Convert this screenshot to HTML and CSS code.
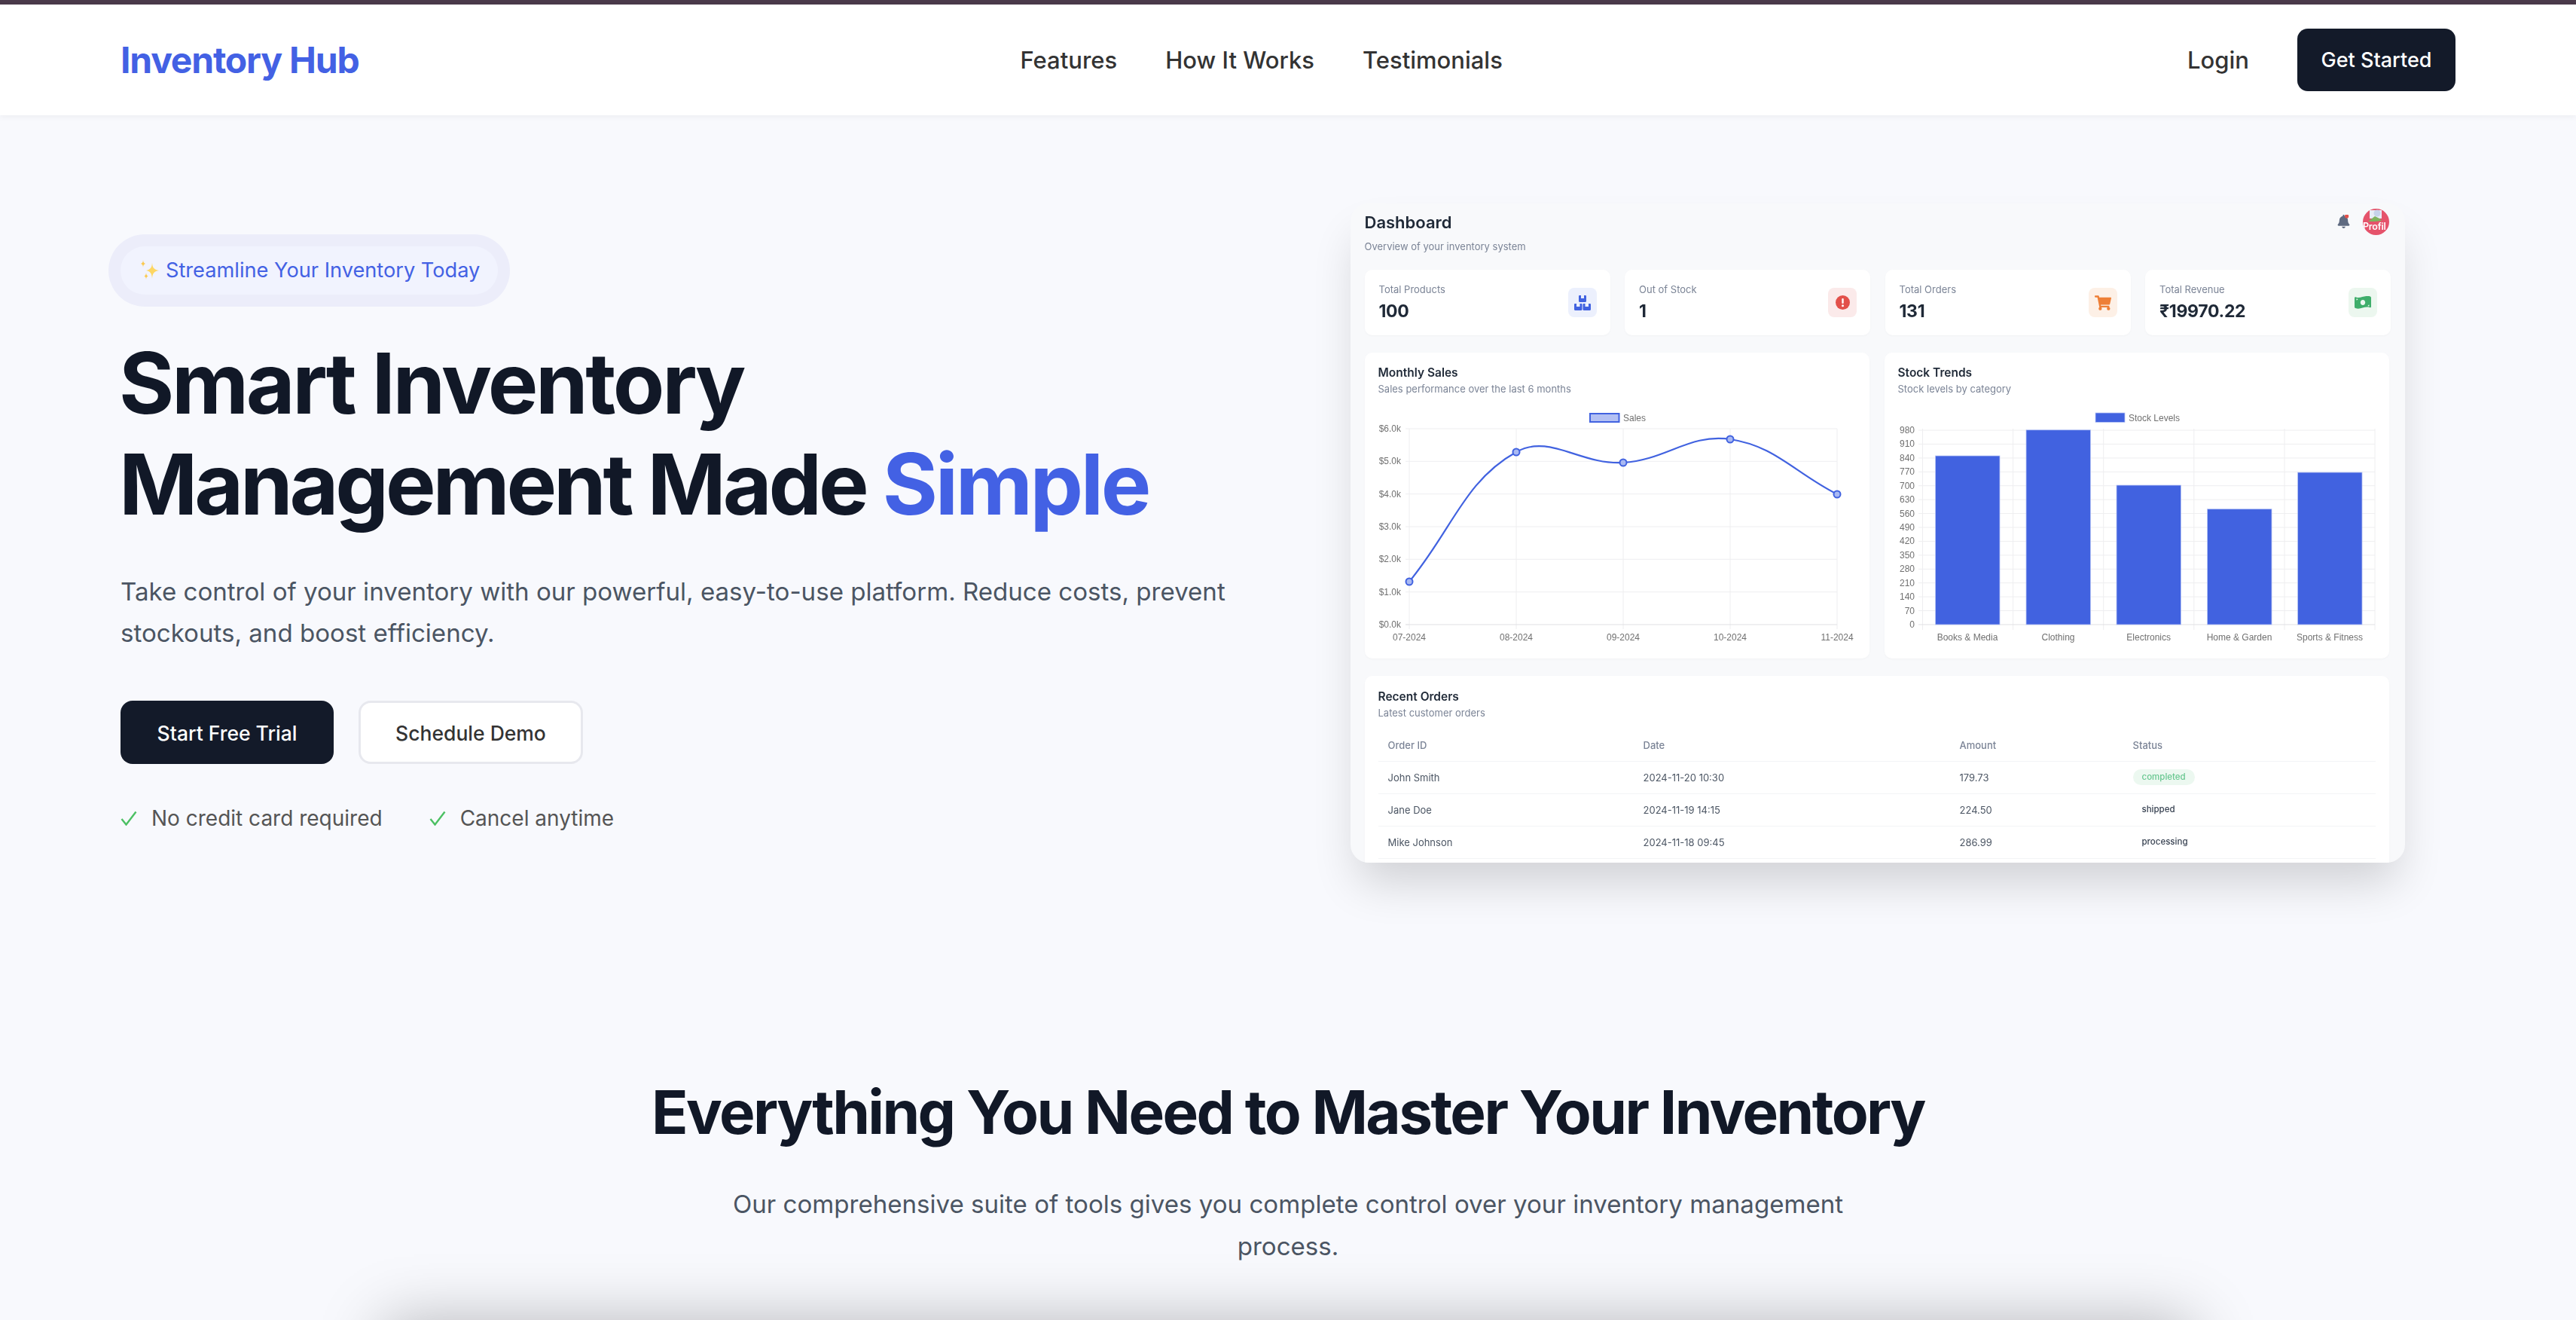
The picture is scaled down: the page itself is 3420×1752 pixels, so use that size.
FILE: index.html
```html
<!DOCTYPE html>
<html lang="en">
<head>
<meta charset="utf-8">
<title>Inventory Hub</title>
<link rel="stylesheet" href="styles.css">
</head>
<body>
<div class="topline"></div>
<header class="nav">
  <a class="logo">Inventory Hub</a>
  <nav class="nav-links"><a>Features</a><a>How It Works</a><a>Testimonials</a></nav>
  <div class="nav-actions"><a class="login">Login</a><a class="btn btn-dark btn-nav">Get Started</a></div>
</header>

<section class="hero">
  <div class="hero-left">
    <div class="pill">
      <svg class="sparkle" viewBox="0 0 26 26"><path fill="#fdd663" d="M16 4c.5 6 2 8.500 9 10-7 1.500-8.500 4-9 11-.5-7-2-9.500-8-11 6-1.500 7.500-4 8-10z"/><path fill="#fbc94f" d="M4 0c.2 3 .8 4 3 5-2.200 1-2.800 2-3 5-.2-3-.8-4-3-5 2.200-1 2.800-2 3-5zM8 17c.2 2.500.7 3.500 2.500 4.500-1.800.8-2.300 1.800-2.500 4.500-.2-2.700-.7-3.700-2.500-4.500 1.800-1 2.300-2 2.500-4.500z"/></svg>
      <span>Streamline Your Inventory Today</span>
    </div>
    <h1>Smart Inventory<br><span class="tight">Management Made </span><em>Simple</em></h1>
    <p class="lead">Take control of your inventory with our powerful, easy-to-use platform. Reduce costs, prevent stockouts, and boost efficiency.</p>
    <div class="cta">
      <a class="btn btn-dark btn-lg">Start Free Trial</a>
      <a class="btn btn-light btn-lg">Schedule Demo</a>
    </div>
    <ul class="checks">
      <li><svg viewBox="0 0 22 20"><path d="M1.500 11l6 7.500L20.500 1.500" fill="none" stroke="#4cc063" stroke-width="2.400"/></svg>No credit card required</li>
      <li><svg viewBox="0 0 22 20"><path d="M1.500 11l6 7.500L20.500 1.500" fill="none" stroke="#4cc063" stroke-width="2.400"/></svg>Cancel anytime</li>
    </ul>
  </div>

  <div class="shot">
    <div class="shot-inner">
      <div class="dash-head">
        <div><div class="dash-title">Dashboard</div><div class="dash-sub">Overview of your inventory system</div></div>
        <div class="dash-user">
          <svg class="bell" viewBox="0 0 448 512"><path fill="#5e6a80" d="M224 512c35.320 0 63.970-28.650 63.970-64H160.030c0 35.350 28.650 64 63.970 64zm215.390-149.710c-19.320-20.760-55.470-51.990-55.470-154.290 0-77.700-54.480-139.900-127.940-155.160V32c0-17.670-14.320-32-31.980-32s-31.980 14.330-31.980 32v20.840C118.560 68.100 64.080 130.300 64.080 208c0 102.300-36.150 133.530-55.470 154.290-6 6.450-8.660 14.160-8.610 21.710.11 16.400 12.980 32 32.100 32h383.800c19.120 0 32-15.600 32.100-32 .05-7.550-2.610-15.270-8.610-21.710z"/><circle cx="340" cy="60" r="75" fill="#e2504a"/></svg>
          <div class="avatar">
            <svg class="avatar-pic" viewBox="0 0 35 19"><path d="M9 2h16v11H9z" fill="#e8edf6"/><path d="M7 17l9-7 6 3 3 3-9 1z" fill="#7fb35f"/><circle cx="19" cy="6" r="4.500" fill="#c6d3ea"/></svg>
            <span>Profil</span>
          </div>
        </div>
      </div>

      <div class="stats">
        <div class="stat"><div><div class="stat-label">Total Products</div><div class="stat-value">100</div></div>
          <div class="stat-icon ic-blue"><svg width="22" height="20" viewBox="0 0 22 20"><path fill="#4162e0" d="M6 1.200C6 .5 6.500 0 7.200 0H9v4h4V0h1.800c.7 0 1.200.5 1.200 1.200V7.800c0 .7-.5 1.200-1.200 1.200H7.200C6.500 9 6 8.500 6 7.800zM0 12.200C0 11.500.5 11 1.200 11H3v4h4.500v-4h1.800c.7 0 1.200.5 1.200 1.200V18.800c0 .7-.5 1.200-1.200 1.200H1.200C.5 20 0 19.500 0 18.800zM11.500 12.200c0-.7.5-1.200 1.200-1.200h1.800v4H19v-4h1.800c.7 0 1.200.5 1.200 1.200V18.800c0 .7-.5 1.200-1.200 1.200h-8.100c-.7 0-1.200-.5-1.200-1.200z"/></svg></div></div>
        <div class="stat"><div><div class="stat-label">Out of Stock</div><div class="stat-value">1</div></div>
          <div class="stat-icon ic-red"><svg width="19" height="19" viewBox="0 0 19 19"><circle cx="9.500" cy="9.500" r="9.500" fill="#e2504a"/><rect x="8.300" y="4" width="2.400" height="7" rx="1" fill="#fff"/><circle cx="9.500" cy="13.700" r="1.500" fill="#fff"/></svg></div></div>
        <div class="stat"><div><div class="stat-label">Total Orders</div><div class="stat-value">131</div></div>
          <div class="stat-icon ic-orange"><svg width="22" height="20" viewBox="0 0 576 512"><path fill="#ee7f36" d="M528.120 301.319l47.273-208C578.806 78.301 567.391 64 551.990 64H159.208l-9.166-44.810C147.758 8.021 137.930 0 126.529 0H24C10.745 0 0 10.745 0 24v16c0 13.255 10.745 24 24 24h69.883l70.248 343.435C147.325 417.100 136 435.222 136 456c0 30.928 25.072 56 56 56s56-25.072 56-56c0-15.674-6.447-29.835-16.824-40h209.647C430.447 426.165 424 440.326 424 456c0 30.928 25.072 56 56 56s56-25.072 56-56c0-22.172-12.888-41.332-31.579-50.405l5.517-24.276c3.413-15.018-8.002-29.319-23.403-29.319H218.117l-6.545-32h293.145c11.206 0 20.920-7.754 23.403-18.681z"/></svg></div></div>
        <div class="stat"><div><div class="stat-label">Total Revenue</div><div class="stat-value">₹19970.22</div></div>
          <div class="stat-icon ic-green"><svg width="22" height="17" viewBox="0 0 22 17"><path fill="#3fae6b" fill-rule="evenodd" d="M0 2.500C0 1.500 1 1 2 1.400c6 2 12-2.800 18-1.200.9.200 2 .8 2 1.800v12c0 1-1 1.500-2 1.100-6-2-12 2.800-18 1.200-.9-.2-2-.8-2-1.800zM11 5c-1.900 0-3.200 1.600-3.200 3.500S9.100 12 11 12s3.200-1.600 3.200-3.500S12.900 5 11 5zM2.500 3.500v2a2 2 0 0 0 2-1.700zM19.500 13.500v-2a2 2 0 0 0-2 1.700z"/></svg></div></div>
      </div>

      <div class="charts">
        <div class="panel">
          <div class="panel-title">Monthly Sales</div>
          <div class="panel-sub">Sales performance over the last 6 months</div>
          <svg class="chart" viewBox="1812 530 670 344">
            <g class="grid">
              <path d="M1871 569H2439M1871 612.300H2439M1871 655.700H2439M1871 699H2439M1871 742.300H2439M1871 785.700H2439M1866 569h5M1866 612.300h5M1866 655.700h5M1866 699h5M1866 742.300h5M1866 785.700h5M1866 829h5"/>
              <path d="M1871 569V835M2013 569V835M2155 569V835M2297 569V835M2439 569V835"/>
              <path class="axis" d="M1866 829H2439"/>
            </g>
            <rect x="2111" y="549" width="38.500" height="11" fill="#b3c0f3" stroke="#4162e0" stroke-width="2"/>
            <text x="2155" y="558.500" class="lbl">Sales</text>
            <g class="lbl end">
              <text x="1860" y="573">$6.0k</text><text x="1860" y="616.300">$5.0k</text><text x="1860" y="659.700">$4.0k</text><text x="1860" y="703">$3.0k</text><text x="1860" y="746.300">$2.0k</text><text x="1860" y="789.700">$1.0k</text><text x="1860" y="833">$0.0k</text>
            </g>
            <g class="lbl mid">
              <text x="1871" y="850">07-2024</text><text x="2013" y="850">08-2024</text><text x="2155" y="850">09-2024</text><text x="2297" y="850">10-2024</text><text x="2439" y="850">11-2024</text>
            </g>
            <path d="M1871 772C1928 703 1944 638.500 2013 600C2057 575 2098 617.400 2155 614C2212 610.600 2243 575 2297 583C2356.500 591.800 2382 627 2439 656" fill="none" stroke="#4162e0" stroke-width="2.200"/>
            <g fill="#a9b9f2" stroke="#4162e0" stroke-width="2">
              <circle cx="1871" cy="772" r="4.500"/><circle cx="2013" cy="600" r="4.500"/><circle cx="2155" cy="614" r="4.500"/><circle cx="2297" cy="583" r="4.500"/><circle cx="2439" cy="656" r="4.500"/>
            </g>
          </svg>
        </div>
        <div class="panel">
          <div class="panel-title">Stock Trends</div>
          <div class="panel-sub">Stock levels by category</div>
          <svg class="chart" viewBox="2502 530 670 344">
            <g class="grid">
              <path d="M2547 571H3153M2547 589.400H3153M2547 607.900H3153M2547 626.300H3153M2547 644.700H3153M2547 663.100H3153M2547 681.600H3153M2547 700H3153M2547 718.400H3153M2547 736.900H3153M2547 755.300H3153M2547 773.700H3153M2547 792.100H3153M2547 810.600H3153"/>
              <path d="M2552.500 569V836M2672.600 569V836M2792.700 569V836M2912.800 569V836M3033 569V836M3153 569V836"/>
              <path class="axis" d="M2547 829H3153"/>
            </g>
            <rect x="2782" y="548" width="39" height="12.500" fill="#4162e0" stroke="#b9c6f5" stroke-width=".8"/>
            <text x="2826" y="558.500" class="lbl">Stock Levels</text>
            <g class="lbl end">
              <text x="2542" y="575">980</text><text x="2542" y="593.400">910</text><text x="2542" y="611.900">840</text><text x="2542" y="630.300">770</text><text x="2542" y="648.700">700</text><text x="2542" y="667.100">630</text><text x="2542" y="685.600">560</text><text x="2542" y="704">490</text><text x="2542" y="722.400">420</text><text x="2542" y="740.900">350</text><text x="2542" y="759.300">280</text><text x="2542" y="777.700">210</text><text x="2542" y="796.100">140</text><text x="2542" y="814.600">70</text><text x="2542" y="833">0</text>
            </g>
            <g fill="#4162e0" stroke="#b9c6f5" stroke-width=".8">
              <rect x="2569.500" y="605" width="85.500" height="224"/><rect x="2690" y="570.700" width="85.500" height="258.300"/><rect x="2810" y="644" width="85.500" height="185"/><rect x="2930.500" y="675.700" width="85.500" height="153.300"/><rect x="3050.500" y="627" width="85.500" height="202"/>
            </g>
            <g class="lbl mid">
              <text x="2612" y="850">Books &amp; Media</text><text x="2732.500" y="850">Clothing</text><text x="2852.700" y="850">Electronics</text><text x="2973" y="850">Home &amp; Garden</text><text x="3093" y="850">Sports &amp; Fitness</text>
            </g>
          </svg>
        </div>
      </div>

      <div class="panel orders">
        <div class="panel-title">Recent Orders</div>
        <div class="panel-sub">Latest customer orders</div>
        <table class="orders-table">
          <colgroup><col class="c1"><col class="c2"><col class="c3"><col class="c4"></colgroup>
          <thead><tr><th>Order ID</th><th>Date</th><th>Amount</th><th>Status</th></tr></thead>
          <tbody>
            <tr><td>John Smith</td><td>2024-11-20 10:30</td><td>179.73</td><td><span class="tag tag-done">completed</span></td></tr>
            <tr><td>Jane Doe</td><td>2024-11-19 14:15</td><td>224.50</td><td><span class="tag">shipped</span></td></tr>
            <tr><td>Mike Johnson</td><td>2024-11-18 09:45</td><td>286.99</td><td><span class="tag">processing</span></td></tr>
          </tbody>
        </table>
      </div>
    </div>
  </div>
</section>

<section class="features">
  <h2>Everything You Need to Master Your Inventory</h2>
  <p>Our comprehensive suite of tools gives you complete control over your inventory management process.</p>
  <div class="feature-shot"></div>
</section>
</body>
</html>
```
FILE: styles.css
```css
* { box-sizing: border-box; }
html, body { margin: 0; height: 100%; overflow: hidden; }
body { background: #f8f9fd; color: #111827; font-family: Inter, "Liberation Sans", sans-serif; }

.topline { height: 6px; background: #4a3a4a; }
.nav { height: 147px; background: #fff; display: flex; align-items: center; padding: 0 160px; box-shadow: 0 2px 8px rgba(0,0,0,.05); position: relative; }
.logo { font-size: 48px; font-weight: 700; color: #4361e4; letter-spacing: -1.2px; }
.nav-links { display: flex; gap: 64px; font-size: 31px; font-weight: 500; color: #333; margin-left: 878px; }
.nav-actions { display: flex; align-items: center; gap: 64px; margin-left: auto; }
.login { font-size: 31px; font-weight: 500; color: #333; }

.btn { display: flex; align-items: center; justify-content: center; font-weight: 500; font-size: 27px; }
.btn-dark { background: #131a29; color: #fff; }
.btn-nav { width: 210px; height: 83px; border-radius: 14px; }
.btn-lg { height: 84px; border-radius: 16px; font-size: 26.500px; padding-top: 2px; }
.btn-dark.btn-lg { width: 283px; }
.btn-light { width: 298px; background: #fff; color: #333; border: 3px solid #e7e8ee; }

.hero { display: grid; grid-template-columns: 1fr 1400px; padding: 117px 227px 0 160px; height: 992px; }
.hero-left { padding-top: 57px; }
.pill { display: inline-flex; align-items: center; gap: 8px; height: 64px; padding: 0 24px 2px 26px; border-radius: 32px; background: #f1f3fe; color: #4361e4; font-size: 27.200px; font-weight: 400; box-shadow: 0 0 0 16px #ecedfa; }
.sparkle { width: 26px; height: 26px; }
h1 { margin: 50px 0 0 -2px; font-size: 112px; line-height: 134.4px; font-weight: 700; letter-spacing: -3.4px; color: #111827; }
h1 .tight { letter-spacing: -4.2px; }
h1 em { font-style: normal; color: #4361e4; }
.lead { margin: 48px 0 0; width: 1500px; font-size: 33.100px; line-height: 55.500px; color: #4b5563; }
.cta { display: flex; gap: 33px; margin-top: 61px; }
.checks { display: flex; gap: 62px; list-style: none; margin: 52px 0 0; padding: 0; font-size: 28px; line-height: 40px; color: #555; }
.checks li { display: flex; align-items: center; gap: 19px; }
.checks svg { width: 22px; height: 20px; }

.shot { width: 1400px; height: 875px; border-radius: 24px; background: #f8f9fb; box-shadow: 0 36px 60px -10px rgba(0,0,0,.16); overflow: hidden; }
.shot-inner { padding: 0 21px 0 18.500px; filter: blur(.45px); }
.dash-head { height: 88px; display: flex; justify-content: space-between; padding-top: 12px; }
.dash-title { font-size: 22px; font-weight: 600; color: #1f2937; line-height: 26px; }
.dash-sub { font-size: 13px; color: #7b8496; margin-top: 11px; line-height: 16px; }
.dash-user { display: flex; gap: 17px; align-items: flex-start; margin-top: -5px; }
.bell { width: 17px; height: 18px; margin-top: 8px; }
.avatar { width: 35px; height: 35px; border-radius: 50%; background: #e5536b; overflow: hidden; }
.avatar-pic { display: block; width: 35px; height: 19px; }
.avatar span { display: block; color: #fff; font-size: 12.500px; font-weight: 600; line-height: 14px; letter-spacing: -.2px; white-space: nowrap; margin-top: -2px; }

.stats { display: grid; grid-template-columns: repeat(4, 326px); gap: 19.500px; }
.stat { height: 87px; background: #fff; border-radius: 10px; box-shadow: 0 1px 3px rgba(0,0,0,.03); padding: 17px 18px 0 19px; display: flex; justify-content: space-between; }
.stat-label { font-size: 13px; color: #7b8496; line-height: 18px; }
.stat-value { font-size: 23px; font-weight: 700; letter-spacing: -.3px; line-height: 28px; margin-top: 6px; color: #1f2937; }
.stat-icon { width: 38px; height: 39px; border-radius: 8px; display: flex; align-items: center; justify-content: center; margin-top: 7px; }
.ic-blue { background: #ecf0fd; }
.ic-red { background: #fbeaea; }
.ic-orange { background: #fdf0e6; }
.ic-green { background: #ecf7ef; }

.charts { display: grid; grid-template-columns: repeat(2, 670px); gap: 20px; margin-top: 23px; }
.panel { background: #fff; border-radius: 10px; box-shadow: 0 1px 3px rgba(0,0,0,.03); padding: 18px 18px 0; }
.charts .panel { height: 406px; padding: 17px 0 0; }
.charts .panel-title, .charts .panel-sub { padding-left: 18px; }
.panel-title { font-size: 15.500px; font-weight: 600; line-height: 20px; color: #1f2937; }
.panel-sub { font-size: 13px; line-height: 16px; margin-top: 3px; color: #7b8496; }
.chart { display: block; width: 670px; height: 344px; margin-top: 6px; }
.grid path { fill: none; stroke: #eeeef0; stroke-width: 1; }
.grid .axis { stroke: #e0e0e3; }
.lbl, .lbl text { font-family: "Liberation Sans", sans-serif; font-size: 12px; fill: #707070; }
.end text { text-anchor: end; }
.mid text { text-anchor: middle; }

.orders { margin-top: 23px; height: 300px; }
.orders-table { width: 100%; border-collapse: collapse; table-layout: fixed; margin-top: 15px; font-size: 13px; }
.c1 { width: 339px; } .c2 { width: 420px; } .c3 { width: 230px; }
.orders-table th { height: 41px; text-align: left; font-weight: 500; color: #7b8496; padding: 0 13px; border-bottom: 1px solid #f3f4f6; }
.orders-table td { height: 43px; padding: 0 13px; color: #4b5563; border-bottom: 1px solid #f3f4f6; }
.tag { display: inline-block; padding: 0 12px; height: 21px; line-height: 21px; border-radius: 11px; font-size: 11.500px; font-weight: 500; color: #374151; }
.tag-done { background: #ecf8f0; color: #68c790; }

.features { text-align: center; padding-top: 281px; }
.features h2 { margin: 0; font-size: 80px; line-height: 100px; font-weight: 700; letter-spacing: -2.6px; color: #111827; }
.features p { width: 1520px; margin: 44px auto 0; font-size: 33.100px; line-height: 56px; color: #4b5563; }
.feature-shot { width: 2400px; height: 600px; margin: 73px auto 0; background: #fff; box-shadow: 0 0 80px rgba(0,0,0,.28); }
```
